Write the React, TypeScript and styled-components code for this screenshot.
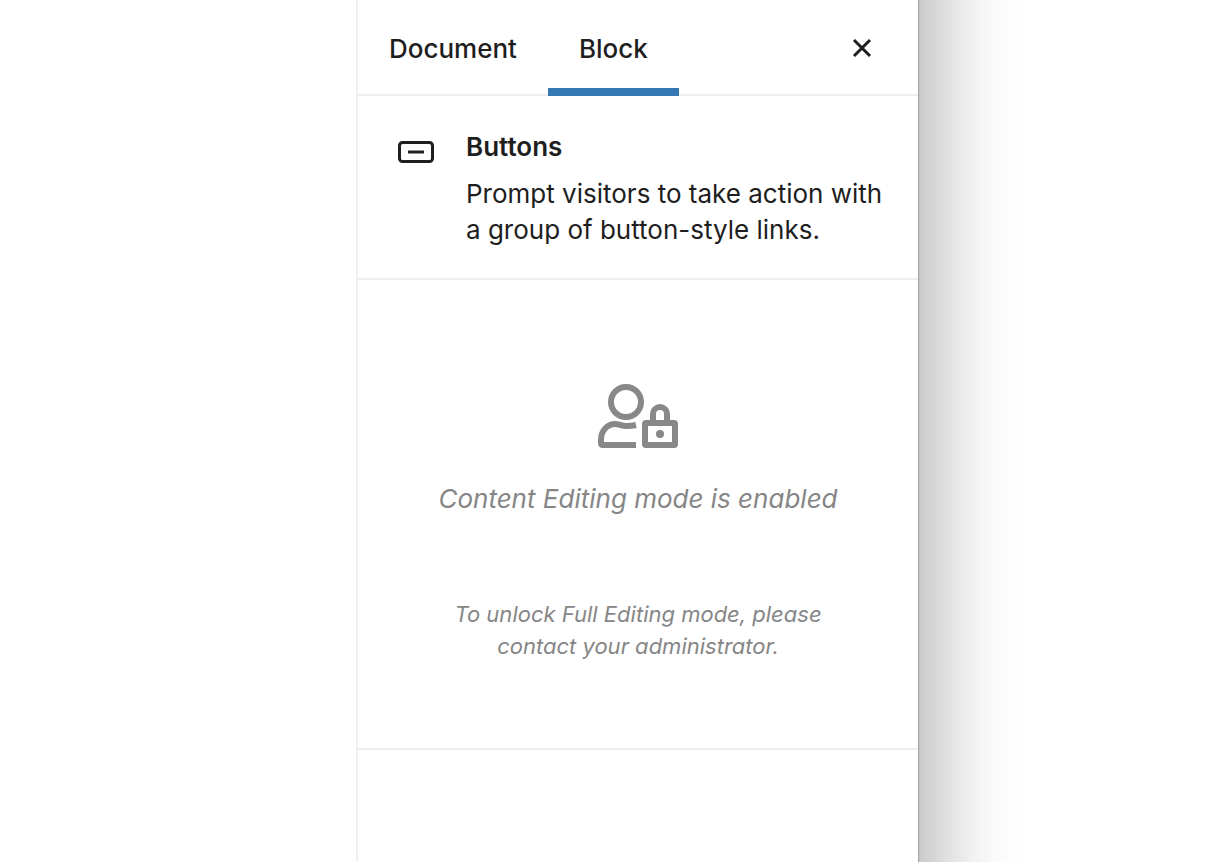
import React from "react";
import styled, { createGlobalStyle } from "styled-components";

const GlobalStyle = createGlobalStyle`
  *, *::before, *::after { box-sizing: border-box; }
  body { margin: 0; background: #fff; color: #1e1e1e; font-family: Inter, "Liberation Sans", sans-serif; }
  h2, p { margin: 0; }
`;

const Page = styled.div`
  display: grid;
  grid-template-columns: minmax(0, 1fr) 562px minmax(0, 308px);
  min-height: 100vh;
  overflow: hidden;
`;

const Canvas = styled.main`
  background: #fff;
`;

const Sidebar = styled.aside`
  border-left: 2px solid #efefef;
  background: #fff;
`;

const Shade = styled.div`
  background: linear-gradient(to right, #8e8e8e 0, #c0c0c0 1px, #cccccc 3px, #d6d6d6 16px, #e4e4e4 34px, #f2f2f2 56px, #fafafa 76px, #fff 104px);
`;

const Header = styled.header`
  display: flex;
  align-items: stretch;
  height: 96px;
  border-bottom: 2px solid #efefef;
`;

const Tab = styled.button<{ $active?: boolean }>`
  height: 96px;
  padding: 2px 31px 0;
  border: 0;
  background: transparent;
  box-shadow: ${(p) => (p.$active ? "inset 0 -8px 0 #3579b4" : "none")};
  color: #1e1e1e;
  font: 500 26px/36px Inter, "Liberation Sans", sans-serif;
`;

const Close = styled.button`
  display: flex;
  align-items: center;
  justify-content: center;
  width: 48px;
  margin: 0 32px 0 auto;
  padding: 2px 0 0;
  border: 0;
  background: transparent;
`;

const BlockCard = styled.section`
  display: flex;
  gap: 26px;
  padding: 32px 32px 30px 34px;
  border-bottom: 2px solid #efefef;
`;

const CardIcon = styled.svg`
  flex: none;
  width: 48px;
  height: 48px;
`;

const CardTitle = styled.h2`
  margin-bottom: 10px;
  font-size: 26px;
  line-height: 38px;
  font-weight: 600;
`;

const CardText = styled.p`
  font-size: 26px;
  line-height: 36px;
`;

const Notice = styled.section`
  display: flex;
  flex-direction: column;
  align-items: center;
  padding: 96px 64px 86px;
  border-bottom: 2px solid #efefef;
  color: #868686;
  text-align: center;
  font-style: oblique 10deg;
`;

const NoticeTitle = styled.p`
  margin: 24px 0 80px;
  font-size: 26px;
  line-height: 38px;
`;

const NoticeText = styled.p`
  max-width: 400px;
  font-size: 22px;
  line-height: 32px;
`;

export default function App() {
  return (
    <>
      <GlobalStyle />
      <Page>
        <Canvas />
        <Sidebar>
          <Header>
            <Tab type="button">Document</Tab>
            <Tab type="button" $active>Block</Tab>
            <Close type="button" aria-label="Close settings">
              <svg width="24" height="24" viewBox="0 0 24 24" fill="none" stroke="#1e1e1e" strokeWidth="3">
                <path d="M4 4l16 16M20 4L4 20" />
              </svg>
            </Close>
          </Header>
          <BlockCard>
            <CardIcon viewBox="0 0 48 48" fill="none" stroke="#1e1e1e" strokeWidth="3" aria-hidden="true">
              <rect x="7.5" y="14.5" width="33" height="19" rx="3" />
              <path d="M16 24h16" />
            </CardIcon>
            <div>
              <CardTitle>Buttons</CardTitle>
              <CardText>Prompt visitors to take action with a group of button-style links.</CardText>
            </div>
          </BlockCard>
          <Notice>
            <svg width="96" height="80" viewBox="0 0 96 80" fill="none" stroke="#888" strokeWidth="6" aria-hidden="true">
              <circle cx="36" cy="26" r="15" />
              <path d="M46 69H13q-2 0-2-2v-3c0-9 6-16 14-16 4 0 7 2 11 2s6 0 10-1" />
              <rect x="55" y="47" width="30" height="22" rx="1" />
              <path d="M63 46v-8a7 7 0 0 1 14 0v8" />
              <circle cx="70" cy="58" r="4" fill="#888" stroke="none" />
            </svg>
            <NoticeTitle>Content Editing mode is enabled</NoticeTitle>
            <NoticeText>To unlock Full Editing mode, please contact your administrator.</NoticeText>
          </Notice>
        </Sidebar>
        <Shade />
      </Page>
    </>
  );
}
